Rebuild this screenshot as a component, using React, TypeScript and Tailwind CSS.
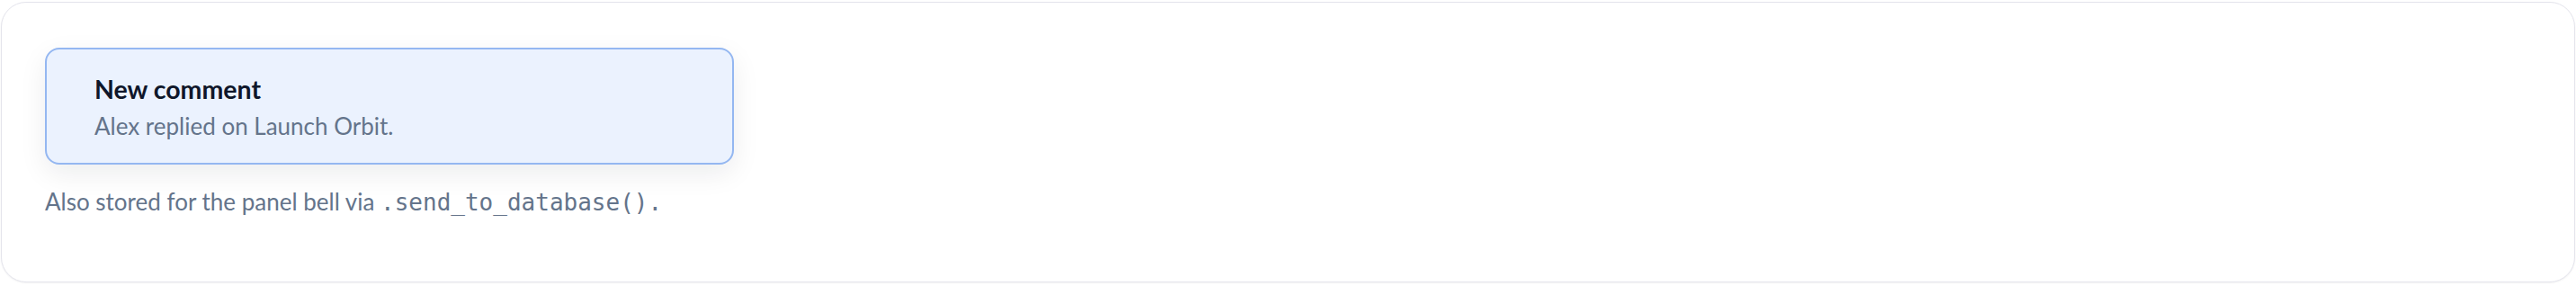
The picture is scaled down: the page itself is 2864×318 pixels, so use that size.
export default function App() {
  return (
    <div className="px-px pt-[2px] pb-[4px] bg-white">
      <div className="h-[312px] rounded-[28px] border border-[#e4e4ec] bg-white shadow-[0_1px_2px_rgba(0,0,0,0.05)] pl-[48px] pt-[50px] font-['Lato',sans-serif]">
        <div className="w-[766px] h-[130px] rounded-2xl border-2 border-[#94b7f1] bg-[#ebf2fe] pl-[53px] pt-[27px] shadow-[0_10px_30px_rgba(15,23,42,0.08)]">
          <p className="text-[28.5px] leading-[35px] font-bold text-[#0f172a]">New comment</p>
          <p className="mt-[5px] text-[26px] leading-[36px] text-[#64748b]">Alex replied on Launch Orbit.</p>
        </div>
        <p className="mt-[23px] text-[26px] leading-[36px] text-[#64748b]">
          Also stored for the panel bell via{" "}
          <code className="font-['DejaVu_Sans_Mono',monospace] text-[26px]">.send_to_database().</code>
        </p>
      </div>
    </div>
  );
}
